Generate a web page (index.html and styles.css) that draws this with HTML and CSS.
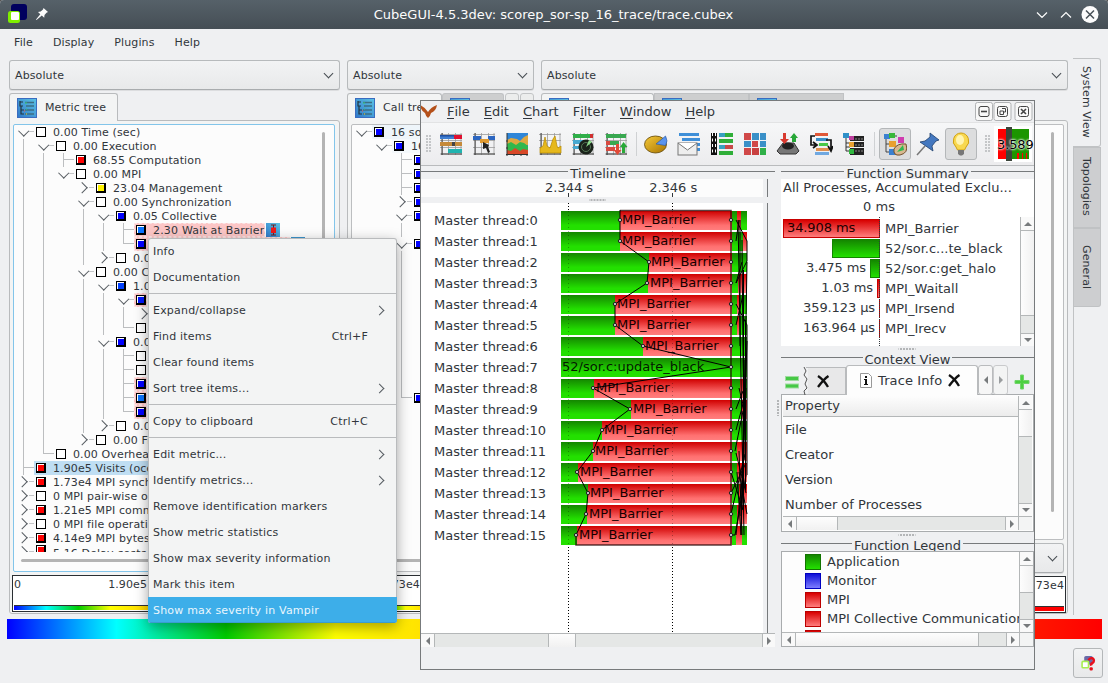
FILE: index.html
```html
<!DOCTYPE html>
<html lang="en">
<head>
<meta charset="utf-8">
<title>CubeGUI</title>
<link rel="stylesheet" href="styles.css">
</head>
<body>
<svg class="defs" width="0" height="0">
  <defs>
    <linearGradient id="ig" x1="0" y1="1" x2="1" y2="0"><stop offset="0" stop-color="#2f78c8"/><stop offset="1" stop-color="#5cc3e4"/></linearGradient>
    <linearGradient id="gold" x1="0" y1="0" x2="1" y2="1"><stop offset="0" stop-color="#f5c93a"/><stop offset="1" stop-color="#a87400"/></linearGradient>
    <symbol id="treeicon" viewBox="0 0 20 20"><rect x=".5" y=".5" width="19" height="19" fill="url(#ig)" stroke="#3a6cc0"/><path d="M3 3v5h3M3 4h3M4 8v8h3M4 12h3" fill="none" stroke="#223540" stroke-width="1.2"/><path d="M8 4.500h9M9 8h8M8 12h9M8 16h9" stroke="#3d6f84" stroke-width="1.300"/><path d="M8 5h2M9 11h1" stroke="#37d07a"/><path d="M7 13h1" stroke="#e05050"/><path d="M9 16h1" stroke="#e8d030"/></symbol>
    <symbol id="grid" viewBox="0 0 24 24"><path d="M1 2.500h22M1 8.500h22M1 15.500h22M1 22h22M3.500 1v22M9.500 1v22M16.500 1v22M22 1v22" stroke="#9a9a9a" stroke-width=".8" fill="none"/><path d="M2 22h21M3 1v22" stroke="#444"/></symbol>
  </defs>
</svg>
<div class="app">
  <header class="titlebar">
    <svg class="logo" width="20" height="20" viewBox="0 0 20 20"><rect x="3" y="0" width="16" height="16" rx="3" fill="#00005e"/><rect x="0" y="7" width="12" height="12" rx="2.500" fill="#7fee00"/><rect x="3" y="8" width="8" height="8" rx="1" fill="#fff"/></svg>
    <svg class="pin" width="12" height="12" viewBox="0 0 12 12"><path d="M7.500 0L12 4l-1.500.8L8.500 7l-.3 2.800-2.400-2.200L.5 12 0 11.500 4.300 6.200 2 4l2.700-.4L7 1.500z" fill="#fcfcfc"/></svg>
    <h1 class="title">CubeGUI-4.5.3dev: scorep_sor-sp_16_trace/trace.cubex</h1>
    <svg class="winbtns" width="64" height="20" viewBox="0 0 64 20" fill="none" stroke="#fcfcfc" stroke-width="1.200"><path d="M1 7.500l5 5 5-5M25 12.500l5-5 5 5"/><circle cx="54" cy="9.500" r="8.500" fill="#fcfcfc" stroke="none"/><path d="M50 5.500l8 8M58 5.500l-8 8" stroke="#475057" stroke-width="1.500"/></svg>
  </header>
  <nav class="menubar"><span>File</span><span>Display</span><span>Plugins</span><span>Help</span></nav>

  <main class="workspace">
    <section class="col metric">
      <div class="combo">Absolute<i class="chev"></i></div>
      <div class="tabs"><div class="tab"><svg width="20" height="20"><use href="#treeicon"/></svg>Metric tree</div></div>
      <div class="page">
        <div class="tree focus">
          <div class="row"><i class="o"></i><b></b><span>0.00 Time (sec)</span></div>
          <div class="row"><i class="v"></i><i class="o"></i><b></b><span>0.00 Execution</span></div>
          <div class="row"><i class="v"></i><i class="v"></i><i class="t"></i><b class="red"></b><span>68.55 Computation</span></div>
          <div class="row"><i class="v"></i><i class="v"></i><i class="o"></i><b></b><span>0.00 MPI</span></div>
          <div class="row"><i class="v"></i><i class="v"></i><i></i><i class="c"></i><b class="yellow"></b><span>23.04 Management</span></div>
          <div class="row"><i class="v"></i><i class="v"></i><i></i><i class="o"></i><b></b><span>0.00 Synchronization</span></div>
          <div class="row"><i class="v"></i><i class="v"></i><i></i><i class="v"></i><i class="o"></i><b class="blue"></b><span>0.05 Collective</span></div>
          <div class="row"><i class="v"></i><i class="v"></i><i></i><i class="v"></i><i class="v"></i><i class="t"></i><div class="hl"><b class="sky"></b><span>2.30 Wait at Barrier</span></div><svg class="mark" width="14" height="14" viewBox="0 0 14 14"><rect width="14" height="14" fill="url(#ig)"/><path d="M5 2h5M7.500 2v10M5 12h5" stroke="#702020"/><rect x="5" y="4.500" width="5" height="5.500" fill="#f01818"/></svg></div>
          <div class="row"><i class="v"></i><i class="v"></i><i></i><i class="v"></i><i class="v"></i><i class="l"></i><div class="hl wide"><b class="blue"></b></div><svg class="mark" width="14" height="14"><rect width="14" height="14" fill="#3c94cc"/></svg></div>
          <div class="row"><i class="v"></i><i class="v"></i><i></i><i class="v"></i><i class="c"></i><b></b><span>0.00</span></div>
          <div class="row"><i class="v"></i><i class="v"></i><i></i><i class="o"></i><b></b><span>0.00 Co</span></div>
          <div class="row"><i class="v"></i><i class="v"></i><i></i><i class="v"></i><i class="o"></i><b class="azure"></b><span>1.0</span></div>
          <div class="row"><i class="v"></i><i class="v"></i><i></i><i class="v"></i><i class="v"></i><i class="o"></i><div class="hl"><b class="blue2"></b></div></div>
          <div class="row"><i class="v"></i><i class="v"></i><i></i><i class="v"></i><i class="v"></i><i class="v"></i><i class="c"></i></div>
          <div class="row"><i class="v"></i><i class="v"></i><i></i><i class="v"></i><i class="v"></i><i class="l"></i><b></b></div>
          <div class="row"><i class="v"></i><i class="v"></i><i></i><i class="v"></i><i class="o"></i><b class="blue"></b><span>0.00</span></div>
          <div class="row"><i class="v"></i><i class="v"></i><i></i><i class="v"></i><i class="v"></i><i class="t"></i><b></b></div>
          <div class="row"><i class="v"></i><i class="v"></i><i></i><i class="v"></i><i class="v"></i><i class="t"></i><b></b></div>
          <div class="row"><i class="v"></i><i class="v"></i><i></i><i class="v"></i><i class="v"></i><i class="t"></i><div class="hl"><b class="blue"></b></div></div>
          <div class="row"><i class="v"></i><i class="v"></i><i></i><i class="v"></i><i class="v"></i><i class="t"></i><div class="hl"><b class="sky"></b></div></div>
          <div class="row"><i class="v"></i><i class="v"></i><i></i><i class="v"></i><i class="v"></i><i class="l"></i><div class="hl"><b class="blue"></b></div></div>
          <div class="row"><i class="v"></i><i class="v"></i><i></i><i class="v"></i><i class="c"></i><b></b><span>0.00</span></div>
          <div class="row"><i class="v"></i><i class="v"></i><i></i><i class="c"></i><b></b><span>0.00 Fi</span></div>
          <div class="row"><i class="v"></i><i class="l"></i><b></b><span>0.00 Overhead</span></div>
          <div class="row"><i class="t"></i><div class="sel"><b class="red"></b><span>1.90e5 Visits (occ)</span></div></div>
          <div class="row"><i class="c"></i><b class="red"></b><span>1.73e4 MPI synch</span></div>
          <div class="row"><i class="c"></i><b></b><span>0 MPI pair-wise o</span></div>
          <div class="row"><i class="c"></i><b class="red"></b><span>1.21e5 MPI comm</span></div>
          <div class="row"><i class="c"></i><b></b><span>0 MPI file operati</span></div>
          <div class="row"><i class="c"></i><b class="red"></b><span>4.14e9 MPI bytes</span></div>
          <div class="row cut"><i class="c"></i><b class="red"></b><span>5.16 Delay costs</span></div>
          <div class="hscroll"></div>
          <div class="vscroll"></div>
        </div>
        <div class="valuebox"><div class="nums"><span>0</span><span>1.90e5</span></div><div class="ramp"></div></div>
      </div>
    </section>

    <section class="col call">
      <div class="combo">Absolute<i class="chev"></i></div>
      <div class="tabs strip"><div class="tab"><svg width="20" height="20"><use href="#treeicon"/></svg>Call tree</div><div class="tab off"><svg width="20" height="20"><use href="#treeicon"/></svg></div><div class="nav"></div><div class="nav"></div></div>
      <div class="page">
        <div class="tree">
          <div class="row cur"><i class="o"></i><b class="blue"></b><span>16 so</span></div>
          <div class="row cur2"><i></i><i class="o"></i><b class="blue"></b><span>16</span></div>
          <div class="row"><i></i><i></i><i class="t"></i><b class="blue"></b></div>
          <div class="row"><i></i><i></i><i class="t"></i><b class="blue"></b></div>
          <div class="row"><i></i><i></i><i class="t"></i><b class="blue"></b></div>
          <div class="row"><i></i><i></i><i class="c"></i><b class="blue"></b></div>
          <div class="row"><i></i><i></i><i class="o"></i><b class="blue"></b></div>
          <div class="row"><i></i><i></i><i class="v"></i></div>
          <div class="row"><i></i><i></i><i class="o"></i><b class="blue"></b></div>
          <div class="row"><i></i><i></i><i class="v"></i></div>
          <div class="row"><i></i><i></i><i class="v"></i></div>
          <div class="row"><i></i><i></i><i class="v"></i></div>
          <div class="row"><i></i><i></i><i class="v"></i></div>
          <div class="row"><i></i><i></i><i class="v"></i></div>
          <div class="row"><i></i><i></i><i class="v"></i></div>
          <div class="row"><i></i><i></i><i class="v"></i></div>
          <div class="row"><i></i><i></i><i class="v"></i></div>
          <div class="row"><i></i><i></i><i class="v"></i></div>
          <div class="row"><i></i><i></i><i class="v"></i></div>
          <div class="row"><i></i><i></i><i class="l"></i><b class="blue"></b></div>
          <div class="hscroll"></div>
        </div>
        <div class="valuebox"><div class="nums lead"><span>1.73e4</span></div><div class="ramp"></div></div>
      </div>
    </section>

    <section class="col system">
      <div class="combo">Absolute<i class="chev"></i></div>
      <div class="tabs"><div class="tab"><svg width="20" height="20"><use href="#treeicon"/></svg></div><div class="tab off"><svg width="20" height="20"><use href="#treeicon"/></svg></div><div class="tab off"><svg width="20" height="20"><use href="#treeicon"/></svg></div></div>
      <div class="page">
        <div class="tree short"><div class="vscroll"></div></div>
        <div class="combo small"><i class="chev"></i></div>
        <div class="valuebox"><div class="nums end"><span>1.73e4</span></div><div class="ramp hot"></div></div>
      </div>
    </section>

    <aside class="sidetabs"><div class="st on">System View</div><div class="st top">Topologies</div><div class="st gen">General</div></aside>
  </main>
  <div class="colorbar"></div>
  <footer class="foot"><div class="help"><svg width="15" height="15" viewBox="0 0 14 14"><rect x="3" y="0" width="8" height="8" rx="1.500" fill="#6a6aa8"/><rect x="1" y="5" width="6" height="6" rx="1" fill="#fff" stroke="#a8ee50" stroke-width="1.500"/><path d="M7 4q1-2.200 3-2t2 2.500q0 1.300-1.500 2.200T9.500 9" fill="none" stroke="#e8101c" stroke-width="2.300"/><rect x="8" y="10.500" width="3" height="3" rx="1" fill="#e8101c"/></svg></div></footer>
</div>

<div class="ctx">
  <div class="mi">Info</div>
  <div class="mi">Documentation</div>
  <hr>
  <div class="mi">Expand/collapse<i class="sub"></i></div>
  <div class="mi">Find items<kbd>Ctrl+F</kbd></div>
  <div class="mi">Clear found items</div>
  <div class="mi">Sort tree items...<i class="sub"></i></div>
  <hr>
  <div class="mi">Copy to clipboard<kbd>Ctrl+C</kbd></div>
  <hr>
  <div class="mi">Edit metric...<i class="sub"></i></div>
  <div class="mi">Identify metrics...<i class="sub"></i></div>
  <div class="mi">Remove identification markers</div>
  <div class="mi">Show metric statistics</div>
  <div class="mi">Show max severity information</div>
  <div class="mi">Mark this item</div>
  <div class="mi active">Show max severity in Vampir</div>
</div>

<div class="vampir">
  <div class="vmenu">
    <svg class="vlogo" width="17" height="13" viewBox="0 0 17 13"><path d="M0 0Q5 2 8 7 11 2 17 0 16 6 11 8 10 12 8 13 6 12 5 8 1 6 0 0z" fill="#b4501a"/></svg>
    <span><u>F</u>ile</span><span><u>E</u>dit</span><span><u>C</u>hart</span><span>F<u>i</u>lter</span><span><u>W</u>indow</span><span><u>H</u>elp</span>
    <svg class="vwin" width="58" height="19" viewBox="0 0 58 19"><g fill="#f8f8f8" stroke="#b0b2b4"><rect x=".5" y=".5" width="17" height="18" rx="2"/><rect x="19" y=".5" width="17" height="18" rx="2"/><rect x="40" y=".5" width="17" height="18" rx="2"/></g><g fill="none" stroke="#444"><rect x="4" y="4.500" width="10" height="10" rx="2"/><path d="M6 9.500h6" stroke-width="1.600"/><rect x="22.500" y="4.500" width="10" height="10" rx="2"/><path d="M27 6.500h3.500v3.500h-2M25 9h3.500v3.500H25z"/><rect x="43.500" y="4.500" width="10" height="10" rx="2"/><path d="M46 7l5 5M51 7l-5 5" stroke-width="1.600"/></g></svg>
  </div>
  <div class="toolbar">
    <i class="handle"></i>
    <svg class="ic" viewBox="0 0 24 24"><use href="#grid"/><rect x="1" y="3" width="15" height="4" fill="#3f7fd2"/><rect x="1" y="3" width="15" height="1.500" fill="#1f4fa0"/><rect x="15" y="3" width="8" height="4" fill="#e01030"/><rect x="1" y="10" width="22" height="4" fill="#c58a3a"/><path d="M13 10h3v4h-3z" fill="#444"/><rect x="9" y="17" width="14" height="4" fill="#20b4b0"/></svg>
    <svg class="ic" viewBox="0 0 24 24"><use href="#grid"/><rect x="1" y="4" width="8" height="4" fill="#2d66c0"/><rect x="16" y="4" width="7" height="4" fill="#2d66c0"/><rect x="8" y="7" width="9" height="4" fill="#e09a30"/><path d="M11 10l6 3-1 2 2 5-2 1-2-5-3 1z" fill="#222"/></svg>
    <svg class="ic" viewBox="0 0 24 24"><rect x="2" y="1" width="21" height="21" fill="#2f86d8"/><path d="M2 8l4-2 6 1 3 2 4-4 4-2v10H2z" fill="#e0a840"/><path d="M2 12l4-2 5 3 4-3 4 1 4 3v6H2z" fill="#32b84c"/><path d="M2 18l4 1 4-3 5 3 3-2 5 1v4H2z" fill="#d84828"/><path d="M2 1v23M1 22.500h22M1 16h2M1 9h2M9 22v2M16 22v2M22 22v2" stroke="#333"/></svg>
    <svg class="ic" viewBox="0 0 24 24"><use href="#grid"/><path d="M2 21v-5l3-2 2-9 2 9 3 2 3-9 2-3 2 10 1 2 3-2v7z" fill="#e6b81c" stroke="#b88a00" stroke-width=".7"/></svg>
    <svg class="ic" viewBox="0 0 24 24"><use href="#grid"/><path d="M2 2h20v4H2z" fill="#2fae48"/><path d="M19 2h3v4h-3z" fill="#d03030"/><path d="M2 8h10v4H2zM2 14h7v3H2z" fill="#48a8d0"/><circle cx="15" cy="15" r="7.500" fill="#1a221a"/><circle cx="15" cy="15" r="4.500" fill="none" stroke="#557755"/><path d="M15 15l6-5-3-2z" fill="#8fe08f"/></svg>
    <svg class="ic" viewBox="0 0 24 24"><use href="#grid"/><path d="M2 2h20v4H2zM2 9h13v4H2z" fill="#38a850"/><path d="M2 9h4v4H2zM2 15h9v4H2z" fill="#d84a40"/><path d="M12 12h3v6h2.500L13.500 23 9.500 18H12z" fill="#e04a38"/><path d="M18 21h3v-6h2.500L19.500 10 16 15h2z" fill="#28a838"/></svg>
    <i class="sep"></i>
    <svg class="ic" viewBox="0 0 24 24"><ellipse cx="11.500" cy="12.500" rx="11" ry="8.500" fill="url(#gold)" stroke="#604400" stroke-width=".8"/><path d="M12 12l9.500-8q3 5 0 9.500z" fill="#5a94ee" stroke="#2050a0" stroke-width=".6"/></svg>
    <svg class="ic" viewBox="0 0 24 24"><path d="M2 1h20v3H2zM5 6h18v3H5zM10 11h13v3H10zM20 16h3v3h-3z" fill="#3f8fd8"/><rect x="1" y="11" width="19" height="12" fill="#eee" stroke="#777"/><path d="M1 11l9.500 7L20 11" fill="#fff" stroke="#777"/></svg>
    <svg class="ic" viewBox="0 0 24 24"><path d="M1 1h6v22H1z" fill="#111"/><path d="M2.500 1v22M5.500 1v22" stroke="#fff" stroke-dasharray="3 2.500"/><path d="M9 1h6v4H9zM9 13h6v4H9z" fill="#38a0c0"/><path d="M15 1h8v4h-8zM9 7h14v4H9zM9 19h14v4H9z" fill="#2fae38"/><path d="M15 13h8v4h-8z" fill="#c84848"/></svg>
    <svg class="ic" viewBox="0 0 24 24"><path d="M1 1h7v7H1zM9 9h6v6H9zM1 16h7v7H1z" fill="#d04848"/><path d="M9 1h7v7H9zM1 9h7v6H1zM17 9h6v6h-6zM17 1h6v7h-6z" fill="#3a90c8"/><path d="M9 16h7v7H9z" fill="#c84040"/><path d="M17 16h6v7h-6z" fill="#2fb048"/></svg>
    <svg class="ic" viewBox="0 0 24 24"><path d="M1 19l6-8h11l5 8-3 3H4z" fill="#777" stroke="#333"/><ellipse cx="12" cy="14" rx="6" ry="3.500" fill="#222"/><path d="M7 1h3v6h3l-4.500 5L4 7h3z" fill="#d83a30"/><path d="M16 10V6h-2l4-5 4 5h-2v4z" fill="#28a838"/></svg>
    <svg class="ic" viewBox="0 0 24 24"><path d="M6 1h13v3H6z" fill="#e05838"/><path d="M7 6h12v3H7z" fill="#3a90c8"/><path d="M10 11h9v3h-9z" fill="#48c848"/><path d="M7 16h13v3H7z" fill="#e09050"/><path d="M6 20h14v3H6z" fill="#70a8e0"/><path d="M6 4H2v9h5M4 10l4 3-4 3M17 8h5v10M19 14l3 5 2-5" fill="none" stroke="#111" stroke-width="1.700"/></svg>
    <svg class="ic" viewBox="0 0 24 24"><path d="M1 1h6v5H1z" fill="#2f90c8"/><path d="M4 6v13h4M4 11h4M4 15h4" fill="none" stroke="#333"/><path d="M8 4h14v5H8zM8 10h14v5H8zM8 16h14v7H8z" fill="#222"/><path d="M7 4h5v4H7z" fill="#c040a0"/><path d="M7 10h5v5H7z" fill="#e8a030"/><path d="M7 17h5v5H7z" fill="#30b840"/><path d="M13 7h8M13 13h8M13 19h8" stroke="#888" stroke-dasharray="2 1"/></svg>
    <i class="sep"></i>
    <div class="tbtn"><svg class="ic" viewBox="0 0 24 24"><path d="M3 4v16M3 12h4M3 20h4M8 4h6" stroke="#444" fill="none"/><path d="M1 2h6v5H1zM6 17h7v6H6z" fill="#3a80d0"/><path d="M6 1h6v5H6z" fill="#38b838"/><path d="M6 9h7v6H6z" fill="#e8a030"/><path d="M15 5h6v6h-6z" fill="#d03cb0"/><path d="M23 12q3 9-6 11-7 1-6-6 3-6 12-5z" fill="#d8b890" stroke="#70502c"/><path d="M14 20l6-7 1 5z" fill="#30b850"/></svg></div>
    <svg class="ic tack" viewBox="0 0 24 24"><path d="M1 23l8-9" stroke="#777" stroke-width="1.500"/><path d="M14 1l9 7-3 1-4 5 1 5L4 10l5-1 5-4z" fill="#4478c0" stroke="#20406c" stroke-width=".8"/></svg>
    <div class="tbtn"><svg class="ic" viewBox="0 0 24 24"><path d="M12 1a8 8 0 0 1 5 14l-1.500 3h-7L7 15A8 8 0 0 1 12 1z" fill="#f8d850" stroke="#d0a010"/><ellipse cx="11" cy="8" rx="4" ry="5" fill="#fff4b0"/><path d="M9 18h6v4l-2 1.500h-2L9 22z" fill="#777"/></svg></div>
    <i class="handle two"></i>
    <div class="gauge"><svg width="31" height="34" viewBox="0 0 31 34"><path fill="#1c9600" d="M8 2h23v30H8z"/><path fill="#f00" d="M0 2h8v30H0zM19 26h2v6h-2zM24 26h1v6h-1zM28 26h1v6h-1z"/><path fill="#3a443a" d="M8 0h6v34H8z"/></svg><span>3.589</span></div>
  </div>
  <div class="docks">
    <div class="left">
      <div class="dt"><span>Timeline</span></div>
      <div class="scale"><div class="ticks"><span>2.344 s</span><span>2.346 s</span></div></div>
      <div class="split"></div>
      <div class="chart">
        <div class="lanes">
          <div class="lane"><span>Master thread:0</span><div class="bar"><s style="width:59px"></s><em>MPI_Barrier</em><q></q><s style="width:5px"></s><q style="width:4px"></q><s style="width:6px"></s></div></div>
          <div class="lane"><span>Master thread:1</span><div class="bar"><s style="width:59px"></s><em>MPI_Barrier</em><q></q><s style="width:11px"></s><q style="width:4px"></q></div></div>
          <div class="lane"><span>Master thread:2</span><div class="bar"><s style="width:88px"></s><em>MPI_Barrier</em><q></q><s style="width:15px"></s></div></div>
          <div class="lane"><span>Master thread:3</span><div class="bar"><s style="width:87px"></s><em>MPI_Barrier</em><q></q><s style="width:6px"></s><q style="width:9px"></q></div></div>
          <div class="lane"><span>Master thread:4</span><div class="bar"><s style="width:54px"></s><em>MPI_Barrier</em><q></q><s style="width:5px"></s><q style="width:3px"></q><s style="width:7px"></s></div></div>
          <div class="lane"><span>Master thread:5</span><div class="bar"><s style="width:54px"></s><em>MPI_Barrier</em><q></q><s style="width:5px"></s><q style="width:2px"></q><s style="width:8px"></s></div></div>
          <div class="lane"><span>Master thread:6</span><div class="bar"><s style="width:82px"></s><em>MPI_Barrier</em><q></q><s style="width:15px"></s></div></div>
          <div class="lane"><span>Master thread:7</span><div class="bar"><s class="full">52/sor.c:update_black</s></div></div>
          <div class="lane"><span>Master thread:8</span><div class="bar"><s style="width:33px"></s><em>MPI_Barrier</em><q></q><s style="width:8px"></s><q style="width:3px"></q><s style="width:4px"></s></div></div>
          <div class="lane"><span>Master thread:9</span><div class="bar"><s style="width:70px"></s><em>MPI_Barrier</em><q></q><s style="width:9px"></s><q style="width:6px"></q></div></div>
          <div class="lane"><span>Master thread:10</span><div class="bar"><s style="width:41px"></s><em>MPI_Barrier</em><q></q><s style="width:15px"></s></div></div>
          <div class="lane"><span>Master thread:11</span><div class="bar"><s style="width:32px"></s><em>MPI_Barrier</em><q></q><s style="width:5px"></s><q style="width:10px"></q></div></div>
          <div class="lane"><span>Master thread:12</span><div class="bar"><s style="width:17px"></s><em>MPI_Barrier</em><q></q><s style="width:5px"></s><q style="width:10px"></q></div></div>
          <div class="lane"><span>Master thread:13</span><div class="bar"><s style="width:27px"></s><em>MPI_Barrier</em><q></q><s style="width:7px"></s><q style="width:8px"></q></div></div>
          <div class="lane"><span>Master thread:14</span><div class="bar"><s style="width:26px"></s><em>MPI_Barrier</em><q></q><s style="width:5px"></s><q style="width:10px"></q></div></div>
          <div class="lane"><span>Master thread:15</span><div class="bar"><s style="width:16px"></s><em>MPI_Barrier</em><q></q><s style="width:4px"></s><q style="width:6px"></q><s style="width:5px"></s></div></div>
        </div>
        <svg class="msgs" width="342" height="430" viewBox="421 203 342 430" fill="none" stroke="#000">
          <path d="M568.500 203v8M568.500 547v86M672.500 203v8M672.500 547v86" stroke-dasharray="1 2"/>
          <path d="M568.500 211v336M672.500 211v336" stroke-dasharray="1 3" opacity=".3"/>
          <path d="M620 210.500h111v334.500H576V535" stroke="#200" stroke-width="1.500" opacity=".75"/>
          <path d="M620 210v31L649 262l-2 21-32 21v21l28 21 88 21-138 21 37 21-28 21-9 21-16 21 11 21-2 21-10 21" stroke-width="1"/>
          <g stroke-width="1"><path d="M736 220l11 21M739 220l-3 21M740 220v126M738 220l6 315M747 241v20l-11 22M747 262l-4 230M742 240l2 220M736 283l6-21M736 304l11 21M736 325l7-30M747 325v150M747 341l-6 175M739 388l6 25M736 409l7-18M736 430l7-26M735 451l8-40M731 472l12 38M731 493l15-30M731 514l14-60M731 535h4l11-60M743 472l-7 63M746 493l-10-40M747 514l-8-42M741 535l-4-63M739 451l3 84M745 360l-3 150M746 388l-4 90M744 420l-3 115M743.500 270v240M745.500 320v170"/></g>
          <g fill="#bbb" stroke="#222"><circle cx="620" cy="220" r="1.700"/><circle cx="620" cy="241" r="1.700"/><circle cx="649" cy="262" r="1.700"/><circle cx="647" cy="283" r="1.700"/><circle cx="615" cy="304" r="1.700"/><circle cx="615" cy="325" r="1.700"/><circle cx="643" cy="346" r="1.700"/><circle cx="593" cy="388" r="1.700"/><circle cx="630" cy="409" r="1.700"/><circle cx="602" cy="430" r="1.700"/><circle cx="593" cy="451" r="1.700"/><circle cx="577" cy="472" r="1.700"/><circle cx="588" cy="493" r="1.700"/><circle cx="586" cy="514" r="1.700"/><circle cx="576" cy="535" r="1.700"/>
          <circle cx="731" cy="220" r="1.700"/><circle cx="731" cy="241" r="1.700"/><circle cx="731" cy="262" r="1.700"/><circle cx="731" cy="283" r="1.700"/><circle cx="731" cy="304" r="1.700"/><circle cx="731" cy="325" r="1.700"/><circle cx="731" cy="346" r="1.700"/><circle cx="731" cy="367" r="1.700"/><circle cx="731" cy="388" r="1.700"/><circle cx="731" cy="409" r="1.700"/><circle cx="731" cy="430" r="1.700"/><circle cx="731" cy="451" r="1.700"/><circle cx="731" cy="472" r="1.700"/><circle cx="731" cy="493" r="1.700"/><circle cx="731" cy="514" r="1.700"/><circle cx="731" cy="535" r="1.700"/></g>
        </svg>
      </div>
      <div class="sb h"><i class="ar lf"></i><i class="gr g1"></i><i class="th t1"></i><i class="gr grow"></i><i class="ar rt"></i></div>
    </div>
    <div class="vgrip"></div>
    <div class="right">
      <div class="dt"><span>Function Summary</span></div>
      <div class="summary">
        <div class="cap">All Processes, Accumulated Exclu...</div>
        <div class="zero">0 ms</div>
        <div class="sumbody">
          <div class="srows">
            <div class="sr"><div class="sv"><p class="r big" style="width:97px">34.908 ms</p></div><span>MPI_Barrier</span></div>
            <div class="sr"><div class="sv"><p class="g" style="width:48px"></p></div><span>52/sor.c...te_black</span></div>
            <div class="sr"><div class="sv">3.475 ms<p class="g" style="width:10px"></p></div><span>52/sor.c:get_halo</span></div>
            <div class="sr"><div class="sv">1.03 ms<p class="r" style="width:3px"></p></div><span>MPI_Waitall</span></div>
            <div class="sr"><div class="sv">359.123 µs<p class="r thin"></p></div><span>MPI_Irsend</span></div>
            <div class="sr"><div class="sv">163.964 µs<p class="r thin"></p></div><span>MPI_Irecv</span></div>
            <div class="axis"></div>
          </div>
          <div class="sb v"><i class="ar up"></i><i class="th grow"></i><i class="gr k1"></i><i class="ar dn"></i></div>
        </div>
      </div>
      <div class="split"></div>
      <div class="dt"><span>Context View</span></div>
      <div class="ctabs">
        <svg class="eq" width="15" height="13" viewBox="0 0 15 13"><rect x=".5" y=".5" width="13" height="4" fill="#46c846" stroke="#9fdc9f"/><rect x=".5" y="8" width="13" height="4" fill="#46c846" stroke="#9fdc9f"/></svg>
        <svg class="tear" width="5" height="28" viewBox="0 0 5 28"><path d="M1 0l2 4-2 4 3 4-2 5 2 4-3 3 1 4" fill="none" stroke="#555"/></svg>
        <div class="ct old"><svg width="13" height="13" viewBox="0 0 13 13"><path d="M1 1q6 4 10 11M11.500 1Q7 4 1 12" stroke="#111" stroke-width="2.300" fill="none"/></svg></div>
        <div class="ct now"><svg width="12" height="15" viewBox="0 0 12 15"><path d="M.5.5h8l3 3v11H.500z" fill="#fff" stroke="#999"/><path d="M5 3h2v2H5zM4 6h3v5h1v1H4v-1h1V7H4z" fill="#111"/></svg><span>Trace Info</span><svg width="13" height="13" viewBox="0 0 13 13"><path d="M1 1q6 4 10 11M11.500 1Q7 4 1 12" stroke="#111" stroke-width="2.300" fill="none"/></svg></div>
        <div class="cn"><i class="tri tl"></i></div><div class="cn dim"><i class="tri tr"></i></div>
        <svg class="plus" width="16" height="16" viewBox="0 0 16 16"><path d="M6.500 1h3v5.500H15v3H9.500V15h-3V9.500H1v-3h5.500z" fill="#4cd040" stroke="#6fd468"/></svg>
      </div>
      <div class="frame info">
        <div class="ftop">
          <div class="list"><div class="head">Property</div><div>File</div><div>Creator</div><div>Version</div><div>Number of Processes</div></div>
          <div class="sb v"><i class="ar up"></i><i class="th k2"></i><i class="gr grow"></i><i class="ar dn"></i></div>
        </div>
        <div class="fbot"><div class="sb h"><i class="ar lf"></i><i class="th k3"></i><i class="gr grow"></i><i class="ar rt"></i></div><i class="corner"></i></div>
      </div>
      <div class="split"></div>
      <div class="dt"><span>Function Legend</span></div>
      <div class="frame legend">
        <div class="ftop">
          <div class="list"><div><i class="g"></i>Application</div><div><i class="m"></i>Monitor</div><div><i class="r"></i>MPI</div><div><i class="r"></i>MPI Collective Communication</div><div><i class="r"></i></div></div>
          <div class="sb v"><i class="ar up"></i><i class="th k2"></i><i class="gr grow"></i><i class="ar dn"></i></div>
        </div>
        <div class="fbot"><div class="sb h"><i class="ar lf"></i><i class="th grow"></i><i class="gr k4"></i><i class="ar rt"></i></div><i class="corner"></i></div>
      </div>
    </div>
  </div>
</div>
</body>
</html>
```
FILE: styles.css
```css
* { box-sizing: border-box; }
body { margin: 0; width: 1108px; height: 683px; overflow: hidden; position: relative; background: #555; font: 11px/14px "DejaVu Sans", sans-serif; letter-spacing: .12px; color: #31363b; }
i, em { font-style: normal; }
s, u { text-decoration: none; }
q { quotes: none; }
q::before, q::after { content: none; }
.defs { position: absolute; }
svg { flex: none; }
.app { width: 1108px; height: 683px; display: flex; flex-direction: column; background: #eff0f2; border-radius: 4px 4px 0 0; overflow: hidden; }

.titlebar { height: 29px; flex: none; display: flex; align-items: center; padding: 0 8px 0 8px; background: linear-gradient(#566169, #454e55); color: #fcfcfc; }
.logo { margin-top: -1px; }
.pin { margin-left: 8px; margin-top: -1px; }
.title { flex: 1; margin: 0; text-align: center; font-size: 13px; font-weight: normal; letter-spacing: 0; padding-left: 23px; white-space: nowrap; }
.menubar { height: 29px; flex: none; display: flex; gap: 20px; padding: 7px 14px; }

.workspace { display: flex; gap: 7px; height: 561px; padding-left: 9px; flex: none; }
.col { display: flex; flex-direction: column; padding-top: 2px; flex: none; }
.metric { width: 331px; }
.call { width: 187px; }
.system { width: 527px; }
.combo { height: 30px; flex: none; display: flex; align-items: center; justify-content: space-between; padding: 2px 6px 0 5px; border: 1px solid #b7babc; border-bottom-color: #a9acae; border-radius: 3px; background: linear-gradient(#f2f3f4, #e8e9ea); box-shadow: 0 1px 0 #dcdddf; }
.chev { width: 7px; height: 7px; border: solid #454b50; border-width: 0 1.300px 1.300px 0; transform: rotate(45deg); margin: -6px 1px 0 auto; }
.combo.small { margin: 3px 0 0; }
.tabs { display: flex; height: 28px; margin-top: 3px; flex: none; position: relative; margin-bottom: -1px; }
.tab { display: flex; align-items: center; gap: 8px; padding: 0 12px 0 7px; height: 28px; border: 1px solid #b9bbbd; border-bottom: 0; border-radius: 3px 3px 0 0; background: #f3f4f4; white-space: nowrap; }
.metric .tab { width: 109px; }
.call .tab { width: 96px; padding-right: 0; }
.call .tab.off { width: 62px; }
.system .tab { width: 113px; }
.system .tab.off { width: 95px; border-radius: 0; }
.tab.off { background: #cdcecf; border-color: #c0c2c4; }
.nav { width: 14px; height: 26px; border: 1px solid #c2c4c6; border-radius: 3px; background: #eceded; margin-left: 1px; }
.page { border: 1px solid #b9bbbd; border-radius: 0 3px 3px 3px; height: 494px; padding: 3px; background: #f3f4f4; display: flex; flex-direction: column; }
.tree { position: relative; height: 448px; flex: none; background: #fcfcfc; border: 1px solid #bcbec0; border-radius: 2px; overflow: hidden; }
.metric .tree { margin-right: 1px; }
.tree.focus { border-color: #83c5ea; }
.tree.short { height: 416px; }
.row { height: 14px; display: flex; align-items: center; white-space: nowrap; }
.row.cut { height: 7px; align-items: flex-start; overflow: hidden; }
.row.cur { background: linear-gradient(90deg, transparent 20px, #eef5fa 20px); }
.row.cur2 { background: linear-gradient(90deg, transparent 40px, #f4f8fb 40px); }
.row span { padding-top: 2px; }
.row > i { width: 20px; height: 14px; position: relative; flex: none; }
.row > .v, .row > .t { background: linear-gradient(#bcbec0, #bcbec0) 9px 0 / 1px 14px no-repeat; }
.row > .l { background: linear-gradient(#bcbec0, #bcbec0) 9px 0 / 1px 7px no-repeat; }
.row > .t::after, .row > .l::after { content: ""; position: absolute; left: 9px; top: 6px; width: 11px; height: 1px; background: #bcbec0; }
.row > .o::after, .row > .c::after { content: ""; position: absolute; left: 15px; top: 6px; width: 5px; height: 1px; background: #c4c6c8; }
.row > .o::before, .row > .c::before { content: ""; position: absolute; left: 6px; top: 2px; width: 6.500px; height: 6.500px; border: solid #555b60; border-width: 0 1.400px 1.400px 0; transform: rotate(45deg); }
.row > .c::before { left: 4px; top: 3px; transform: rotate(-45deg); }
.row b { width: 10px; height: 10px; margin-left: 2px; flex: none; border: 1.500px solid #000; background: #fff; }
.row b + span { margin-left: 7px; }
.row b[class] { border: 1px solid #000; border-right-width: 2px; border-bottom-width: 2px; box-shadow: inset 1px 1px 0 #fff; }
.row .red { background: #f00; } .row .blue { background: #00f; } .row .blue2 { background: #0018ff; } .row .azure { background: #0040ff; } .row .sky { background: #0a74ff; } .row .yellow { background: #fff200; }
.hl, .sel { height: 14px; display: flex; align-items: center; background: #fcc6c6; outline: 1px dashed #fbe3e3; outline-offset: -1px; padding-right: 1px; }
.hl span { letter-spacing: .18px; }
.hl.wide { width: 156px; }
.sel { background: #bfdef3; outline: 0; width: 130px; }
.mark { margin-left: 1px; }
.hscroll { position: absolute; left: 7px; right: 14px; bottom: 9px; height: 3px; border-radius: 2px; background: #b4b4b4; }
.vscroll { position: absolute; top: 7px; bottom: 27px; right: 9px; width: 3px; border-radius: 2px; background: #b4b4b4; }
.valuebox { height: 37px; flex: none; margin: 3px -2px 0 -1px; border: 1px solid #2a2e32; background: #fff; padding: 1px; display: flex; flex-direction: column; justify-content: space-between; }
.nums { display: flex; gap: 87px; padding-top: 1px; }
.nums.end { justify-content: flex-end; }
.nums.lead { padding-left: 29px; }
.ramp { height: 5px; border-top: 1px solid #333; background: linear-gradient(90deg, #00f, #0ff 10%, #0c0 20%, #ff0 30%, #f00); }
.ramp.hot { background: #f00; }
.sidetabs { width: 28px; margin-left: -2px; display: flex; flex-direction: column; align-items: flex-start; border-left: 1px solid #c0c2c4; height: 557px; }
.st { writing-mode: vertical-rl; width: 27px; padding-top: 8px; border: 1px solid #c0c2c4; border-left: 0; background: #cdced0; line-height: 27px; }
.st.on { height: 89px; padding-top: 7px; background: #eff0f2; width: 28px; margin-left: -1px; border-radius: 0 3px 3px 0; }
.st.top { height: 81px; padding-top: 9px; }
.st.gen { height: 79px; padding-top: 16px; border-radius: 0 0 3px 0; }
.colorbar { height: 20px; flex: none; margin: 0 6px 0 7px; background: linear-gradient(90deg, #00f, #0ff 10%, #0c0 20%, #ff0 30%, #f00); }
.foot { display: flex; justify-content: flex-end; padding: 9px 5px 0; }
.help { width: 30px; height: 30px; border: 1px solid #b4b7b9; border-radius: 3px; display: flex; align-items: center; justify-content: center; background: linear-gradient(#f2f3f4, #e8e9ea); }

/* context menu */
.ctx { position: absolute; left: 148px; top: 238px; width: 249px; height: 385px; background: #f3f4f4; border-radius: 3px; box-shadow: inset 0 0 0 1px #b9bbbd, 0 4px 14px rgba(0,0,0,.35); overflow: visible; }
.mi { height: 26px; display: flex; align-items: center; padding: 2px 14px 0 5px; justify-content: space-between; letter-spacing: .2px; white-space: nowrap; }
.mi.active { background: #3daee9; color: #eaf6fd; border-bottom: 1px solid #3a9cd0; border-radius: 0 0 3px 3px; padding-top: 3px; }
.mi kbd { font: inherit; margin-right: 15px; }
.sub { width: 7px; height: 7px; margin-top: -2px; border: solid #555b60; border-width: 1.200px 1.200px 0 0; transform: rotate(45deg); }
.ctx hr { height: 7px; margin: 0; border: 0; background: linear-gradient(#b9bbbd, #b9bbbd) 0 3px / 100% 1px no-repeat; }

/* trace window */
.vampir { position: absolute; left: 420px; top: 100px; width: 615px; height: 570px; border: 1px solid #777a7c; background: #eff0f2; font-size: 13px; line-height: 16px; letter-spacing: 0; display: flex; flex-direction: column; overflow: hidden; }
.vmenu { height: 22px; display: flex; align-items: center; gap: 14px; flex: none; border-bottom: 1px solid #e2e3e4; }
.vmenu u { border-bottom: 1px solid #31363b; display: inline-block; height: 15px; line-height: 16px; }
.vlogo { margin-right: -4px; margin-left: -1px; }
.vwin { margin-left: auto; margin-right: 1px; }
.toolbar { height: 43px; flex: none; position: relative; display: flex; align-items: center; background: linear-gradient(#f6f7f8, #ececee); border-bottom: 1px solid #b9bbbd; }
.ic { width: 24px; height: 24px; margin-right: 9px; }
.handle { width: 5px; height: 18px; flex: none; margin: 0 8px 0 5px; background: radial-gradient(circle at 1px 1px, #c4c6c8 .8px, transparent .9px) 0 0 / 3px 3px; }
.handle.two { margin: 0 4px 0 0; }
.sep { width: 1px; height: 24px; background: #cfd1d3; margin: 0 7px 0 -1px; }
.sep + .tbtn { margin-left: -3px; }
.tbtn { width: 32px; height: 32px; flex: none; margin-right: 8px; border: 1px solid #b4b7b9; border-radius: 3px; background: #dcddde; display: flex; align-items: center; justify-content: center; }
.tbtn .ic { margin: 0; }
.ic.tack { margin-left: -3px; margin-right: 5px; }
.gauge { position: relative; width: 38px; height: 36px; flex: none; background: #fff; padding: 1px 4px; }
.gauge span { position: absolute; left: 3px; top: 11px; letter-spacing: -.1px; color: #000; text-shadow: 0 0 2px #fff, 0 0 2px #fff, 0 0 3px #fff; }
.docks { display: flex; height: 481px; }
.left { width: 354px; flex: none; }
.vgrip { width: 6px; flex: none; background: radial-gradient(circle at 1px 1px, #b4b6b8 .8px, transparent .9px) 2px 0 / 4px 3px; clip-path: inset(233px 0 231px 0); }
.right { width: 253px; flex: none; }
.dt { height: 13px; display: flex; align-items: flex-start; overflow: hidden; gap: 2px; }
.dt span { line-height: 15px; }
.dt::before, .dt::after { content: ""; flex: 1; height: 1px; background: #777a7c; margin-top: 5px; }
.scale { height: 18px; width: 347px; border-right: 1px solid #777a7c; }
.ticks { width: 342px; height: 18px; background: linear-gradient(transparent 14px, #31363b 14px) 147px 0 / 1px 18px no-repeat, linear-gradient(transparent 14px, #31363b 14px) 251px 0 / 1px 18px no-repeat, #fcfcfc; padding-left: 124px; display: flex; gap: 56px; white-space: nowrap; line-height: 17px; }
.split { height: 6px; background: radial-gradient(circle at 1px 1px, #b4b6b8 .8px, transparent .9px) center 2px / 3px 6px; clip-path: inset(0 calc(50% - 8px) 0 calc(50% - 9px)); }
.chart { position: relative; height: 430px; width: 347px; border-right: 1px solid #777a7c; background: linear-gradient(90deg, #fff 342px, transparent 342px); padding-top: 8px; }
.lanes { display: flex; flex-direction: column; gap: 2px; }
.lane { display: flex; height: 19px; line-height: 19px; }
.lane > span { width: 140px; padding-left: 13px; flex: none; }
.bar { width: 186px; display: flex; color: #160000; line-height: 18px; white-space: nowrap; }
.bar s { background: linear-gradient(#148600, #23e000 75%); }
.bar s.full { width: 186px; padding-left: 1px; color: #041a00; }
.bar em { flex: 1; background: linear-gradient(#d00000, #ff7070 75%, #ff7d7d); padding-left: 2px; min-width: 0; }
.bar q { background: linear-gradient(#e00000, #ff7d7d); width: 1px; }
.msgs { position: absolute; left: 0; top: 0; }
.sb { display: flex; background: #e5e7e6; flex: none; }
.sb.h { height: 14px; border-top: 1px solid #b4b7b8; }
.sb.v { width: 14px; flex-direction: column; border-left: 1px solid #b4b7b8; }
.sb i { flex: none; }
.sb .grow { flex: 1; }
.sb.h .th { background: linear-gradient(#fdfdfd, #f1f1f1); border: solid #b4b7b8; border-width: 0 1px; }
.sb.v .th { background: linear-gradient(90deg, #fdfdfd, #f1f1f1); border: solid #b4b7b8; border-width: 1px 0; }
.ar { width: 13px; height: 13px; background: #f9f9f9; display: flex; align-items: center; justify-content: center; }
.ar::before, .tri::before { content: ""; border: 4px solid transparent; }
.ar.lf::before, .tl::before { border-right-color: #777a7c; border-left: 0; }
.ar.rt::before, .tr::before { border-left-color: #777a7c; border-right: 0; }
.ar.up::before { border-bottom-color: #777a7c; border-top: 0; }
.ar.dn::before { border-top-color: #777a7c; border-bottom: 0; }
.ar.rt { border-left: 1px solid #b4b7b8; }
.ar.dn { border-top: 1px solid #b4b7b8; }
.g1 { width: 114px; border-left: 1px solid #b4b7b8; }
.t1 { width: 28px; }
.k1 { height: 17px; } .k2 { height: 28px; } .k3 { width: 42px; } .k4 { width: 27px; }
.summary { height: 167px; background: #fff; }
.cap { padding-left: 2px; height: 18px; line-height: 17px; }
.zero { width: 196px; text-align: center; height: 20px; line-height: 20px; }
.sumbody { display: flex; height: 129px; justify-content: space-between; }
.srows { position: relative; padding-top: 2px; width: 239px; display: flex; flex-direction: column; gap: 1px; }
.sr { display: flex; height: 19px; line-height: 19px; white-space: nowrap; }
.sr > span { padding-left: 5px; }
.sv { width: 99px; display: flex; justify-content: flex-end; gap: 4px; line-height: 18px; letter-spacing: -.1px; }
.sv p { margin: 0; flex: none; border: 1px solid #138600; }
.sv .r { border-color: #c80000; }
.sv .thin { width: 1px; border-width: 0 0 0 1px; }
.sv .big { padding-left: 3px; color: #200000; line-height: 16px; }
.g { background: linear-gradient(#148600, #23e000); }
.r { background: linear-gradient(#d80000, #ff7d7d); }
.m { background: linear-gradient(#1010d8, #7d7dff); }
.axis { position: absolute; left: 98px; top: 0; bottom: 0; border-left: 1px dotted #31363b; }
.ctabs { display: flex; height: 30px; align-items: center; position: relative; margin-bottom: -1px; z-index: 1; }
.eq { margin: 4px 3px 0 4px; }
.tear { align-self: flex-end; margin-right: -2px; }
.ct { display: flex; align-items: center; border: 1px solid #b9bbbd; border-bottom: 0; }
.old { width: 40px; height: 28px; align-self: flex-end; padding-left: 11px; background: linear-gradient(90deg, transparent 2px, #e8e8e9 2px); border-left: 0; border-bottom: 1px solid #b9bbbd; }
.now { width: 132px; height: 30px; background: #fdfdfd; padding-left: 13px; gap: 6px; border-radius: 3px 3px 0 0; }
.now span { letter-spacing: .1px; white-space: nowrap; }
.cn { width: 15px; height: 30px; border: 1px solid #b9bbbd; border-radius: 3px; background: #f6f6f6; display: flex; align-items: center; justify-content: center; }
.cn.dim { opacity: .7; }
.tri { display: flex; }
.plus { margin: 4px 0 0 6px; }
.frame { border: 1px solid #a9acae; background: #fdfdfd; display: flex; flex-direction: column; }
.info { height: 138px; padding: 1px; }
.legend { height: 96px; margin-top: 0; }
.ftop { display: flex; flex: 1; min-height: 0; }
.list { flex: 1; min-width: 0; overflow: hidden; }
.info .list div { height: 25px; line-height: 26px; padding-left: 2px; }
.info .list .head { height: 21px; line-height: 20px; border-bottom: 1px solid #b4b7b8; background: linear-gradient(#fdfdfd, #ececec); }
.legend .list div { height: 19px; display: flex; align-items: center; gap: 6px; padding-left: 23px; white-space: nowrap; }
.legend .list i { width: 16px; height: 16px; flex: none; border: 1px solid #b00; }
.legend .list .g { border-color: #137400; } .legend .list .m { border-color: #0000c0; }
.fbot { display: flex; height: 14px; flex: none; }
.fbot .sb { flex: 1; }
.corner { width: 14px; background: #f3f4f4; border: solid #b4b7b8; border-width: 1px 0 0 1px; }
```
